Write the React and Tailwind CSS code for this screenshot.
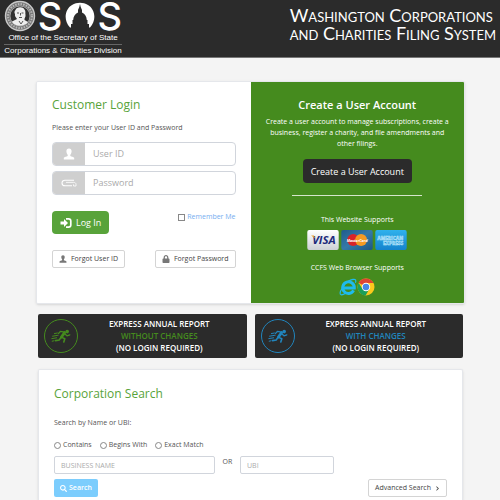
import { FaLock, FaSearch, FaChevronRight } from "react-icons/fa";

const PersonIcon = ({ className }) => (
  <svg viewBox="0 0 12 12" className={className} fill="currentColor" aria-hidden="true">
    <path d="M6 0.5C7.7 0.5 8.7 1.7 8.6 3.4C8.5 5 7.9 6 7.3 6.7V8C8.5 8.7 10.5 9 11.2 9.8V11.5H0.8V9.8C1.5 9 3.5 8.7 4.7 8V6.7C4.1 6 3.5 5 3.4 3.4C3.3 1.7 4.3 0.5 6 0.5Z" />
  </svg>
);

const PasswordIcon = () => (
  <svg viewBox="0 0 16 8" className="w-4 h-2" fill="none" stroke="#fff" aria-hidden="true">
    <path d="M13 1.2H4C2.2 1.2 1 2.4 1 4S2.2 6.8 4 6.8H11" strokeWidth="1.1" />
    <path d="M5 3.4H12.5C14 3.4 15 4 15 5.2V7H12.5V5.4" strokeWidth="0.8" />
  </svg>
);

const LogInIcon = () => (
  <svg viewBox="0 0 12 12" className="w-3 h-3" aria-hidden="true">
    <path d="M0.5 4.6H4V2L8 6L4 10V7.4H0.5Z" fill="#fff" />
    <path d="M6 1.8H8.5C10 1.8 10.8 2.7 10.8 4V8C10.8 9.3 10 10.2 8.5 10.2H6" fill="none" stroke="#fff" strokeWidth="1.7" />
  </svg>
);

const RunnerIcon = () => (
  <svg viewBox="0 0 20 14" className="w-5 h-[14px]" fill="none" stroke="currentColor" strokeLinecap="round" strokeLinejoin="round" aria-hidden="true">
    <circle cx="16.2" cy="2.6" r="1.8" fill="currentColor" stroke="none" />
    <path d="M13.6 3.6L10.4 8" strokeWidth="2.8" />
    <path d="M13.4 3.2L9.4 2.4L7.6 4.4M14 5L16 6.8L18.8 5.8" strokeWidth="1.3" />
    <path d="M10.8 8.4L13.8 9.8L12.8 13M10 8.4L8.2 11L4.6 11.6" strokeWidth="1.6" />
    <path d="M3.4 4.6L6.4 4M1.6 7.2L7.2 6.2M0.8 9.6L5.6 8.8M1.2 12.2L3 11.8" strokeWidth="1" />
  </svg>
);

const SealIcon = () => (
  <svg viewBox="0 0 32 32" className="w-8 h-8" aria-hidden="true">
    <circle cx="16" cy="16" r="14.5" fill="#777" stroke="#c9c9c9" strokeWidth="1.4" />
    <circle cx="16" cy="16" r="12" fill="none" stroke="#b8b8b8" strokeWidth="2" strokeDasharray="1.5 1.2" />
    <circle cx="16" cy="16" r="10" fill="#303030" stroke="#bbb" strokeWidth="0.7" />
    <path d="M11.5 10C12 7 19 6 20.5 9.5C22 11 21 13 21.5 15C22 17 20 18 20.5 20L24 22C22 25 18 26 15 25.7C12 25.4 9 24 8 21.5L13 19C12 17 10.5 16.5 11 14C10 12.5 10.5 11 11.5 10Z" fill="#eee" />
    <path d="M13 13H15M17.5 13H19.5M15 17.5H18M16.5 13V15.5M15 21L17 24L19 21" stroke="#555" strokeWidth="1" fill="none" />
  </svg>
);

const DomeIcon = () => (
  <svg viewBox="0 0 30 28" className="w-8 h-7" aria-hidden="true">
    <path d="M5 25.5C-2 18 0 7 7 3C12 0 18 0 23 3C30 7 32 18 25 25.5Z" fill="#fff" />
    <path d="M15 2L15.7 5L17 8V10.5C20 12 21.6 14.5 21.8 18H22.5V22H24V28H6V22H7.5V18H8.2C8.4 14.5 10 12 13 10.5V8L14.3 5Z" fill="#2b2b2b" />
  </svg>
);

const VisaCard = () => (
  <svg viewBox="0 0 33 21" className="w-8 h-5" role="img" aria-label="Visa">
    <defs>
      <linearGradient id="visaBg" x1="0" y1="0" x2="0" y2="1">
        <stop offset="0" stopColor="#fff" />
        <stop offset="1" stopColor="#ccd0d5" />
      </linearGradient>
    </defs>
    <rect width="33" height="21" rx="2" fill="url(#visaBg)" />
    <text x="17.5" y="14.5" textAnchor="middle" fontFamily="Open Sans, sans-serif" fontWeight="700" fontStyle="italic" fontSize="12" fill="#1c2a7c">VISA</text>
    <path d="M4 5.8H7L8.3 9Z" fill="#e9a02f" />
  </svg>
);

const MasterCard = () => (
  <svg viewBox="0 0 33 21" className="w-8 h-5" role="img" aria-label="MasterCard">
    <defs>
      <linearGradient id="mcBg" x1="0" y1="0" x2="1" y2="1">
        <stop offset="0" stopColor="#1f5c8c" />
        <stop offset="0.5" stopColor="#3579a8" />
        <stop offset="1" stopColor="#1c5685" />
      </linearGradient>
    </defs>
    <rect width="33" height="21" rx="2" fill="url(#mcBg)" />
    <circle cx="12.5" cy="10.5" r="6.3" fill="#d8232a" />
    <circle cx="20.8" cy="10.5" r="6.3" fill="#f59a23" />
    <text x="16.7" y="12.4" textAnchor="middle" fontFamily="Open Sans, sans-serif" fontWeight="700" fontStyle="italic" fontSize="4" fill="#fff">MasterCard</text>
  </svg>
);

const AmexCard = () => (
  <svg viewBox="0 0 33 21" className="w-8 h-5" role="img" aria-label="American Express">
    <defs>
      <linearGradient id="amexBg" x1="0" y1="0" x2="0" y2="1">
        <stop offset="0" stopColor="#2fb1ec" />
        <stop offset="1" stopColor="#1583cd" />
      </linearGradient>
    </defs>
    <rect width="33" height="21" rx="2" fill="url(#amexBg)" />
    <g fontFamily="Open Sans, sans-serif" fontWeight="800" fontSize="5" fill="#6cc4f2" stroke="#d5effc" strokeWidth="0.3">
      <text x="2" y="10">AMERICAN</text>
      <text x="8" y="15.5">EXPRESS</text>
    </g>
  </svg>
);

const IeIcon = () => (
  <svg viewBox="0 0 18 18" className="w-[18px] h-[18px]" role="img" aria-label="Internet Explorer">
    <path d="M14.6 12.4A5.8 5.8 0 1 1 15.3 9.9H5" fill="none" stroke="#1ebbee" strokeWidth="3" />
    <path d="M4.5 7.5C7 4.5 11 2 14 1.4C16.8 0.9 17.4 2.4 16.4 4.8M3 10.5C1 13.5 0.4 16.2 2 16.7C3.2 17 5 16.3 6.5 15.3" fill="none" stroke="#1ebbee" strokeWidth="1.2" />
  </svg>
);

const ChromeIcon = () => (
  <svg viewBox="0 0 18 18" className="w-[18px] h-[18px]" role="img" aria-label="Chrome">
    <circle cx="9" cy="9" r="8.5" fill="#fcc91c" />
    <path d="M9 9L1.6 4.8A8.5 8.5 0 0 1 16.5 5H9Z" fill="#dd4433" />
    <path d="M1.6 4.8A8.5 8.5 0 0 0 8.6 17.5L12.3 11L9 9L5.5 11Z" fill="#1c9f58" />
    <circle cx="9" cy="9" r="4.2" fill="#fff" />
    <circle cx="9" cy="9" r="3.3" fill="#4687e4" />
  </svg>
);

const ExpressBanner = ({ change, color }) => (
  <a href="#express" className="flex items-center h-11 px-[6px] rounded-xs bg-[#2b2b2b] text-white">
    <span className={`flex items-center justify-center w-[34px] h-[34px] rounded-full border ${color}`}>
      <RunnerIcon />
    </span>
    <span className="flex-1 text-center text-[8px] leading-[12px] font-semibold">
      <span className="block">EXPRESS ANNUAL REPORT</span>
      <span className={`block ${color}`}>{change}</span>
      <span className="block">(NO LOGIN REQUIRED)</span>
    </span>
  </a>
);

const smallButton = "flex items-center gap-1 h-[18px] px-[6px] border border-[#d4d4d4] rounded-xs bg-white text-[7px] text-[#444]";

const App = () => {
  return (
    <div className="min-h-screen flex flex-col bg-[#f4f4f4] font-['Open_Sans',sans-serif] text-[#555]">

      <header className="flex justify-between h-[58px] px-1 bg-[#2b2b2b] border-b border-[#777] text-white">
        <div className="w-[118px]">
          <div className="flex items-center justify-between h-8">
            <SealIcon />
            <span className="font-['Inter',sans-serif] font-medium text-[38px] leading-8">S</span>
            <DomeIcon />
            <span className="font-['Inter',sans-serif] font-medium text-[38px] leading-8">S</span>
          </div>
          <div className="font-['Liberation_Sans',sans-serif] text-[8px] leading-[12px] text-center whitespace-nowrap">
            <p className="border-b border-[#666]">Office of the Secretary of State</p>
            <p>Corporations &amp; Charities Division</p>
          </div>
        </div>
        <h1 className="pt-[6px] font-['Lato',sans-serif] text-[18px] leading-[18px] whitespace-nowrap [font-variant:small-caps]">
          Washington Corporations<br />and Charities Filing System
        </h1>
      </header>

      <main className="flex-1 flex flex-col pt-[23px] pl-9 pr-[35px]">

        <section className="grid grid-cols-2 h-[223px] rounded-xs border border-gray-200 shadow-sm overflow-hidden">
          <form className="bg-white pt-4 px-[15px]">
            <h2 className="text-[12px] leading-[14px] text-[#58a33a]">Customer Login</h2>
            <p className="mt-[10px] text-[7px] leading-[12px]">Please enter your User ID and Password</p>

            <div className="flex h-6 mt-2 rounded-sm border border-gray-300 overflow-hidden">
              <label htmlFor="userId" aria-label="User ID" className="flex items-center justify-center w-8 bg-[#cfcfcf] text-white">
                <PersonIcon className="w-3 h-3" />
              </label>
              <input id="userId" placeholder="User ID" className="flex-1 min-w-0 px-2 text-[9px] placeholder:text-[#aaa]" />
            </div>
            <div className="flex h-6 mt-[5px] rounded-sm border border-gray-300 overflow-hidden">
              <label htmlFor="password" aria-label="Password" className="flex items-center justify-center w-8 bg-[#cfcfcf]">
                <PasswordIcon />
              </label>
              <input id="password" type="password" placeholder="Password" className="flex-1 min-w-0 px-2 text-[9px] placeholder:text-[#aaa]" />
            </div>

            <div className="flex items-start justify-between mt-4">
              <button type="button" className="flex items-center gap-1 h-[23px] px-2 rounded-sm bg-[#58a33a] text-white text-[9px]">
                <LogInIcon /> Log In
              </button>
              <label className="flex items-center gap-[2px] text-[7px] leading-[12px] text-[#76aef0]">
                <input type="checkbox" className="appearance-none w-[7px] h-[7px] border border-[#888] bg-white" />
                Remember Me
              </label>
            </div>

            <div className="flex justify-between mt-4">
              <button type="button" className={smallButton}>
                <PersonIcon className="w-2 h-2 text-[#777]" /> Forgot User ID
              </button>
              <button type="button" className={smallButton}>
                <FaLock className="w-2 h-2 text-[#777]" /> Forgot Password
              </button>
            </div>
          </form>

          <div className="flex flex-col items-center pt-4 px-2 bg-[#458b1e] text-white text-center text-[7px] leading-[11px]">
            <h2 className="text-[11px] leading-[14px] font-semibold">Create a User Account</h2>
            <p className="mt-1 px-1">
              Create a user account to manage subscriptions, create a business, register a charity, and file amendments and other filings.
            </p>
            <button type="button" className="h-6 mt-[10px] px-2 rounded-sm bg-[#2b2b2b] text-[9px]">Create a User Account</button>
            <hr className="w-[130px] mt-3 border-[#d5e5cb]" />
            <p className="mt-[18px]">This Website Supports</p>
            <div className="flex gap-[2px] mt-[5px]">
              <VisaCard />
              <MasterCard />
              <AmexCard />
            </div>
            <p className="mt-3">CCFS Web Browser Supports</p>
            <div className="flex mt-[5px]">
              <IeIcon />
              <ChromeIcon />
            </div>
          </div>
        </section>

        <section className="grid grid-cols-2 gap-2 mt-[10px] mx-[2px]">
          <ExpressBanner change="WITHOUT CHANGES" color="text-[#458b1e] border-[#458b1e]" />
          <ExpressBanner change="WITH CHANGES" color="text-[#2185bd] border-[#2185bd]" />
        </section>

        <form className="flex-1 mt-[11px] mx-[2px] px-[15px] pt-4 bg-white rounded-t-xs border border-b-0 border-gray-200 shadow-sm text-[7px] leading-[12px]">
          <h2 className="text-[12px] leading-[16px] text-[#58a33a]">Corporation Search</h2>
          <p className="mt-[15px]">Search by Name or UBI:</p>

          <div className="flex gap-2 mt-[10px]">
            {["Contains", "Begins With", "Exact Match"].map(option => (
              <label key={option} className="flex items-center gap-[2px]">
                <input type="radio" name="match" className="appearance-none w-[7px] h-[7px] rounded-full border border-[#888] bg-white" />
                {option}
              </label>
            ))}
          </div>

          <div className="flex mt-[5px]">
            <input aria-label="Business name" placeholder="BUSINESS NAME" className="w-[161px] h-[18px] px-[6px] border border-gray-300 rounded-xs placeholder:text-[#aaa]" />
            <span className="w-[25px] text-center">OR</span>
            <input aria-label="UBI" placeholder="UBI" className="w-[94px] h-[18px] px-[6px] border border-gray-300 rounded-xs placeholder:text-[#aaa]" />
          </div>

          <div className="flex justify-between mt-[5px]">
            <button type="button" className="flex items-center gap-[2px] h-[18px] px-[6px] rounded-xs bg-[#7ccdfd] text-white font-semibold">
              <FaSearch className="w-[7px] h-[7px]" /> Search
            </button>
            <button type="button" className={smallButton}>
              Advanced Search <FaChevronRight className="w-[5px] h-[5px]" />
            </button>
          </div>
        </form>

      </main>
    </div>
  );
};

export default App;
